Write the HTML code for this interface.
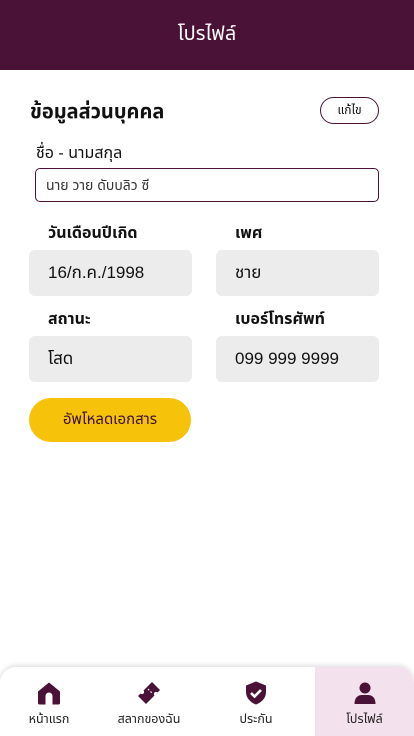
<!DOCTYPE html>
<html><head><meta charset="utf-8"><style>
*{box-sizing:border-box;margin:0;padding:0}
body{width:414px;height:736px;background:#fff;font-family:"Liberation Sans","Noto Sans Thai","Loma","Garuda",sans-serif;position:relative;overflow:hidden;color:#111}
.hdr{height:70px;background:#4a1236;color:#fff;font-size:20px;text-align:center;line-height:68px}
.abs{position:absolute}
.box{position:absolute;background:#ececec;border-radius:6px;height:46px;font-size:17px;line-height:46px;padding-left:19px}
.lbl{position:absolute;font-size:16px;font-weight:bold}
.nav{position:absolute;left:0;top:667px;width:414px;height:69px;background:#fff;border-radius:16px 16px 0 0;box-shadow:0 -2px 5px rgba(0,0,0,.12);overflow:hidden}
.it{position:absolute;top:0;height:69px;text-align:center;font-size:12.5px;color:#222}
.it svg{position:absolute;top:14px;left:50%;margin-left:-12px}
.it span{position:absolute;top:43px;left:0;right:0}
</style></head><body>
<div class="hdr">โปรไฟล์</div>
<div class="abs" style="left:30px;top:97px;font-size:20px;font-weight:bold">ข้อมูลส่วนบุคคล</div>
<div class="abs" style="left:320px;top:97px;width:59px;height:27px;border:1px solid #4a1236;border-radius:14px;font-size:12px;text-align:center;line-height:25px">แก้ไข</div>
<div class="abs" style="left:36px;top:142px;font-size:16px">ชื่อ - นามสกุล</div>
<div class="abs" style="left:35px;top:168px;width:344px;height:34px;border:1px solid #4a1236;border-radius:5px;font-size:14px;line-height:32px;padding-left:10px;color:#333">นาย วาย ดับบลิว ซี</div>
<div class="lbl" style="left:48px;top:222px">วันเดือนปีเกิด</div>
<div class="lbl" style="left:235px;top:222px">เพศ</div>
<div class="box" style="left:29px;top:250px;width:163px">16/ก.ค./1998</div>
<div class="box" style="left:216px;top:250px;width:163px">ชาย</div>
<div class="lbl" style="left:48px;top:308px">สถานะ</div>
<div class="lbl" style="left:235px;top:308px">เบอร์โทรศัพท์</div>
<div class="box" style="left:29px;top:336px;width:163px">โสด</div>
<div class="box" style="left:216px;top:336px;width:163px">099 999 9999</div>
<div class="abs" style="left:29px;top:398px;width:162px;height:44px;background:#f7c20a;border-radius:22px;font-size:15px;text-align:center;line-height:44px;color:#3a1030">อัพโหลดเอกสาร</div>
<div class="nav">
<div class="it" style="left:0;width:98px"><svg width="24" height="24" viewBox="0 0 24 24"><path d="M12 1.5 L23 10.5 V22 a1.5 1.5 0 0 1-1.5 1.5 H15.5 V15 a3.5 3.5 0 0 0-7 0 V23.5 H2.5 A1.5 1.5 0 0 1 1 22 V10.5 Z" fill="#4a1236"/></svg><span>หน้าแรก</span></div>
<div class="it" style="left:98px;width:102px"><svg width="24" height="24" viewBox="0 0 24 24"><path d="M15 1 L23 9 L20.5 11.5 a2 2 0 0 0-3 3 L9 23 L1 15 L3.5 12.5 a2 2 0 0 0 3-3 Z" fill="#4a1236"/><path d="M11 8 l1.2 1.2 M13.5 10.5 l1.2 1.2" stroke="#fff" stroke-width="1.2"/></svg><span>สลากของฉัน</span></div>
<div class="it" style="left:206px;width:100px"><svg width="24" height="24" viewBox="0 0 24 24"><path d="M12 0.5 L22 4.5 V11 C22 17 17.5 21.5 12 23.5 C6.5 21.5 2 17 2 11 V4.5 Z" fill="#4a1236"/><path d="M7 12 l3.5 3.5 L17 9" stroke="#fff" stroke-width="2.6" fill="none"/></svg><span>ประกัน</span></div>
<div class="it" style="left:315px;width:99px;background:#f4e1ee"><svg width="24" height="24" viewBox="0 0 24 24"><circle cx="12" cy="7" r="5.5" fill="#4a1236"/><path d="M1.5 23 C1.5 16.5 5 14 9 14 H15 C19 14 22.5 16.5 22.5 23 Z" fill="#4a1236"/></svg><span>โปรไฟล์</span></div>
</div>
</body></html>
